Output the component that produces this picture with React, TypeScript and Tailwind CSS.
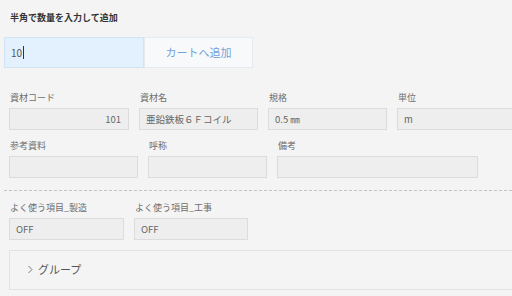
import React from 'react'

const font = "font-['Noto_Sans_CJK_JP','Noto_Sans',sans-serif]"

function Field({ label, value, w, align = 'left', ml = 'ml-0' }: { label: string; value?: string; w: string; align?: 'left' | 'right'; ml?: string }) {
  return (
    <div className={`flex flex-col shrink-0 ${w} ${ml}`}>
      <div className="h-[14px] leading-[14px] text-[9px] text-[#6e6e6e] pl-[1px]">{label}</div>
      <div
        className={`mt-[3px] h-[22px] border border-[#dcdcdc] bg-[#eeeeee] flex items-center pl-[6px] pr-[7px] text-[9.5px] text-[#666] ${
          align === 'right' ? 'justify-end' : ''
        }`}
      >
        {value}
      </div>
    </div>
  )
}

export default function App() {
  return (
    <div className={`w-[512px] h-[296px] overflow-hidden bg-[#f4f4f4] ${font}`}>
      <div className="pl-[10px] pt-[11px] h-[25px] text-[9px] font-bold leading-[14px] text-[#333]">
        半角で数量を入力して追加
      </div>

      <div className="mt-[12px] ml-[4px] flex h-[31px]">
        <div className="w-[140px] border border-[#d2e4f4] bg-[#e3f1fe] flex items-center pl-[6px] text-[10px] text-[#555]">
          10
          <span className="ml-[1px] h-[13px] w-px bg-[#333]" />
        </div>
        <div className="w-[109px] border border-[#e6eaee] bg-[#f7f9fb] flex items-center justify-center text-[11px] text-[#72a2d8]">
          カートへ追加
        </div>
      </div>

      <div className="pl-[9px]">
        <div className="mt-[23px] flex">
          <Field label="資材コード" value="101" w="w-[120px]" align="right" />
          <Field label="資材名" value="亜鉛鉄板６Ｆコイル" w="w-[119px]" ml="ml-[10px]" />
          <Field label="規格" value="0.5 ㎜" w="w-[119px]" ml="ml-[10px]" />
          <Field label="単位" value="m" w="w-[130px]" ml="ml-[10px]" />
        </div>
        <div className="mt-[9px] flex">
          <Field label="参考資料" w="w-[129px]" />
          <Field label="呼称" w="w-[119px]" ml="ml-[10px]" />
          <Field label="備考" w="w-[201px]" ml="ml-[10px]" />
        </div>
      </div>

      <div className="mt-[12px] ml-[4px] border-t border-dashed border-[#c4c4c4]" />

      <div className="pl-[9px]">
        <div className="mt-[10px] flex">
          <Field label="よく使う項目_製造" value="OFF" w="w-[115px]" />
          <Field label="よく使う項目_工事" value="OFF" w="w-[114px]" ml="ml-[10px]" />
        </div>
        <div className="mt-[10px] h-[40px] w-[520px] border border-[#e2e2e2] flex items-center pl-[17px] pb-[1px] text-[11px] text-[#555]">
          <svg width="7" height="9" viewBox="0 0 7 9" className="mr-[4px]">
            <path d="M1.5 1 L5 4.5 L1.5 8" fill="none" stroke="#777" strokeWidth="1" />
          </svg>
          グループ
        </div>
      </div>
    </div>
  )
}
